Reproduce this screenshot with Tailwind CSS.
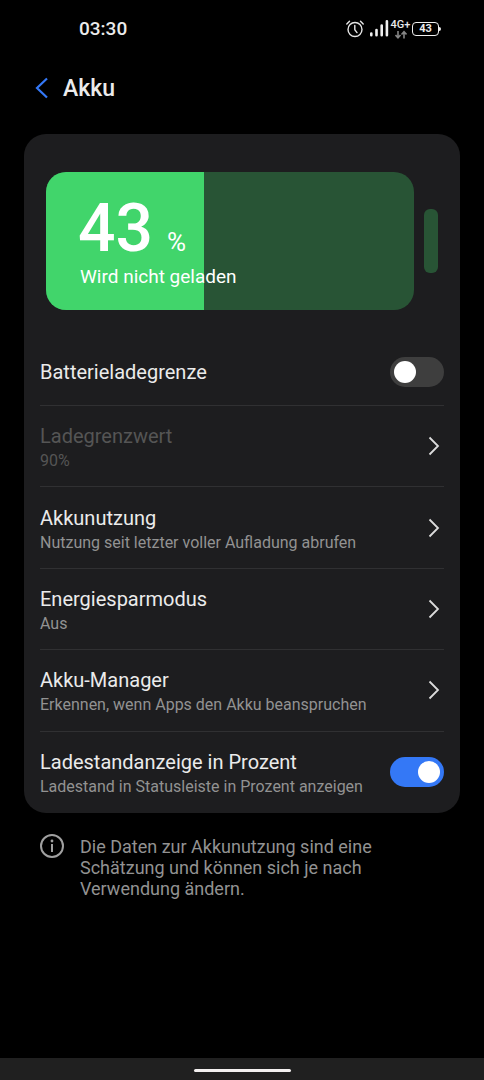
<!DOCTYPE html>
<html lang="de">
<head>
<meta charset="utf-8">
<meta name="viewport" content="width=device-width, initial-scale=1">
<title>Akku</title>
<script src="https://cdn.jsdelivr.net/npm/@tailwindcss/browser@4"></script>
</head>
<body class="flex min-h-screen flex-col bg-black font-['Roboto',sans-serif] text-[#ebebeb]">
  <div class="flex h-[58px] items-center justify-between pr-[43px] pl-[79px]">
    <time class="text-[19px] leading-6 font-medium">03:30</time>
    <div class="flex items-center">
      <svg class="mr-1 h-5 w-5" viewBox="0 0 20 20" fill="none" stroke="#e6e6e6" stroke-width="1.400" stroke-linecap="round" aria-label="Wecker">
        <circle cx="10" cy="10.500" r="7"/>
        <path d="M9.800 6.500v4.300l2.200 2.800M1.800 5 4.500 2.200M18.200 5 15.500 2.200"/>
      </svg>
      <svg class="mr-[2px] h-5 w-5" viewBox="0 0 20 20" fill="none" stroke="#f0f0f0" stroke-width="2.600" stroke-linecap="round" aria-label="Mobilfunk">
        <path d="M2.300 14.500v1.800M7.500 11v5.300M12.700 6.500v9.800M17.900 2.200v14.100"/>
      </svg>
      <div class="mr-[2px] flex w-[19px] flex-col items-center">
        <span class="text-[11px] leading-[10px] font-medium">4G+</span>
        <svg class="h-[9px] w-3" viewBox="0 0 12 9" fill="none" stroke="#858585" stroke-width="1.600" aria-hidden="true">
          <path d="M3 1v6.500M.5 5 3 7.700 5.500 5M9 8.500V2M6.500 4.500 9 1.800 11.500 4.500"/>
        </svg>
      </div>
      <div class="flex items-center">
        <span class="flex h-[14px] w-[27px] items-center justify-center rounded-[4px] border border-[#f0f0f0] text-[11px] leading-3 font-bold">43</span>
        <span class="h-1 w-[2px] rounded-r-sm bg-[#f0f0f0]"></span>
      </div>
    </div>
  </div>

  <header class="flex h-[60px] items-center pl-[34px]">
    <button type="button" aria-label="Zurück" class="mr-[13px]">
      <svg class="h-6 w-4" viewBox="0 0 16 24" fill="none" stroke="#3478f6" stroke-width="2.200"><path d="M13 2.500 3 12 13 21.500"/></svg>
    </button>
    <h1 class="pt-[2px] text-[23px] leading-7 font-medium">Akku</h1>
  </header>

  <main class="flex-1 px-6 pt-4">
    <section class="rounded-[22px] bg-[#1d1d1f] px-4 pt-[38px]">
      <div class="flex items-center gap-[10px] pr-[6px] pl-[6px]">
        <div class="relative h-[138px] flex-1 overflow-hidden rounded-[20px] bg-[#285435]">
          <div class="absolute inset-y-0 left-0 bg-[#41d56b]" style="width:43%"></div>
          <div class="relative pt-6 pl-8 text-white">
            <div class="flex items-baseline gap-[14px] font-medium">
              <span class="text-[66px] leading-[66px]">43</span><span class="text-[26px] leading-[26px] font-normal">%</span>
            </div>
            <p class="pl-[2px] text-[19px] leading-[30px]">Wird nicht geladen</p>
          </div>
        </div>
        <div class="h-[64px] w-[14px] rounded-[6px] bg-[#285435]"></div>
      </div>

      <div class="mt-[28px] flex h-[68px] items-center justify-between border-b border-[#303032]">
        <label for="limit" class="text-[20px] leading-6">Batterieladegrenze</label>
        <input id="limit" type="checkbox" role="switch" class="flex h-[30px] w-[54px] appearance-none items-center rounded-full bg-[#3e3e3e] px-1 before:h-[22px] before:w-[22px] before:rounded-full before:bg-white checked:justify-end checked:bg-[#3478f6]">
      </div>

      <div class="grid min-h-[407px] auto-rows-fr">
        <button type="button" disabled class="flex items-center justify-between border-b border-[#303032] text-left">
          <span class="flex flex-col pt-[2px] text-[#555]"><span class="text-[20px] leading-[28px]">Ladegrenzwert</span><span class="text-[16px] leading-[22px]">90%</span></span>
          <svg class="h-5 w-5" viewBox="0 0 20 20" fill="none" stroke="#dcdcdc" stroke-width="1.800"><path d="M5.500 1.500 14 10 5.500 18.500"/></svg>
        </button>
        <button type="button" class="flex items-center justify-between border-b border-[#303032] text-left">
          <span class="flex flex-col pt-[2px]"><span class="text-[20px] leading-[28px]">Akkunutzung</span><span class="text-[16px] leading-[22px] text-[#929292]">Nutzung seit letzter voller Aufladung abrufen</span></span>
          <svg class="h-5 w-5" viewBox="0 0 20 20" fill="none" stroke="#dcdcdc" stroke-width="1.800"><path d="M5.500 1.500 14 10 5.500 18.500"/></svg>
        </button>
        <button type="button" class="flex items-center justify-between border-b border-[#303032] text-left">
          <span class="flex flex-col pt-[2px]"><span class="text-[20px] leading-[28px]">Energiesparmodus</span><span class="text-[16px] leading-[22px] text-[#929292]">Aus</span></span>
          <svg class="h-5 w-5" viewBox="0 0 20 20" fill="none" stroke="#dcdcdc" stroke-width="1.800"><path d="M5.500 1.500 14 10 5.500 18.500"/></svg>
        </button>
        <button type="button" class="flex items-center justify-between border-b border-[#303032] text-left">
          <span class="flex flex-col pt-[2px]"><span class="text-[20px] leading-[28px]">Akku-Manager</span><span class="text-[16px] leading-[22px] text-[#929292]">Erkennen, wenn Apps den Akku beanspruchen</span></span>
          <svg class="h-5 w-5" viewBox="0 0 20 20" fill="none" stroke="#dcdcdc" stroke-width="1.800"><path d="M5.500 1.500 14 10 5.500 18.500"/></svg>
        </button>
        <div class="flex items-center justify-between">
          <label for="percent" class="flex flex-col pt-[2px]"><span class="text-[20px] leading-[28px]">Ladestandanzeige in Prozent</span><span class="text-[16px] leading-[22px] text-[#929292]">Ladestand in Statusleiste in Prozent anzeigen</span></label>
          <input id="percent" type="checkbox" role="switch" checked class="flex h-[30px] w-[54px] shrink-0 appearance-none items-center rounded-full bg-[#3e3e3e] px-1 before:h-[22px] before:w-[22px] before:rounded-full before:bg-white checked:justify-end checked:bg-[#3478f6]">
        </div>
      </div>
    </section>

    <div class="flex gap-4 pt-[21px] pr-[60px] pl-4">
      <svg class="h-6 w-6 shrink-0" viewBox="0 0 24 24" fill="none" stroke="#a0a0a0" stroke-width="2" aria-hidden="true">
        <circle cx="12" cy="12" r="11"/><path d="M12 10v8"/><circle cx="12" cy="7" r="1.400" fill="#a0a0a0" stroke="none"/>
      </svg>
      <p class="pt-[2px] text-[18px] leading-[21px] text-[#929292]">Die Daten zur Akkunutzung sind eine Schätzung und können sich je nach Verwendung ändern.</p>
    </div>
  </main>

  <footer class="flex h-[22px] items-center justify-center bg-[#202020]">
    <div class="mt-[2px] h-[3px] w-[97px] rounded-full bg-[#f4f0f0]"></div>
  </footer>
</body>
</html>
